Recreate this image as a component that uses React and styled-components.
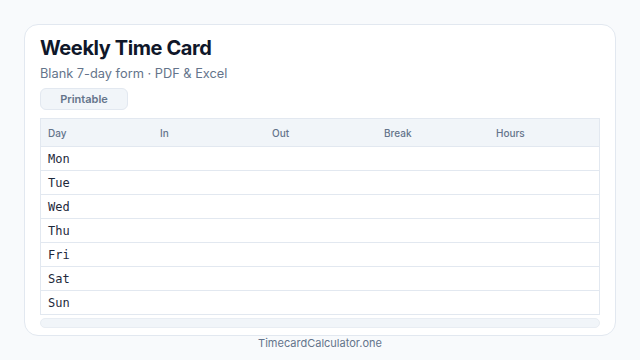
import React from "react";
import styled, { createGlobalStyle } from "styled-components";

const Global = createGlobalStyle`
  html, body { margin: 0; padding: 0; background: #f8fafc; }
  body { font-family: Inter, "Liberation Sans", sans-serif; }
`;

const Page = styled.div`
  width: 640px;
  height: 360px;
  box-sizing: border-box;
  padding: 24px 24px 0;
  display: flex;
  flex-direction: column;
`;

const Card = styled.div`
  background: #ffffff;
  border: 1px solid #e2e8f0;
  border-radius: 14px;
  padding: 10px 15px 7px;
  display: flex;
  flex-direction: column;
`;

const Title = styled.h1`
  margin: 0;
  font-size: 20px;
  line-height: 26px;
  font-weight: 700;
  color: #0f172a;
  letter-spacing: -0.4px;
`;

const Subtitle = styled.div`
  margin-top: 4px;
  font-size: 12.8px;
  line-height: 18px;
  color: #64748b;
`;

const Badge = styled.div`
  margin-top: 5px;
  width: 88px;
  height: 22px;
  box-sizing: border-box;
  border: 1px solid #e2e8f0;
  border-radius: 6px;
  background: #f1f5f9;
  color: #64748b;
  font-size: 11px;
  font-weight: 600;
  display: flex;
  align-items: center;
  justify-content: center;
`;

const Table = styled.div`
  margin-top: 8px;
  border: 1px solid #e2e8f0;
  display: flex;
  flex-direction: column;
`;

const Row = styled.div`
  display: grid;
  grid-template-columns: repeat(5, 112px);
  height: ${(p) => (p.$head ? "27px" : "23px")};
  align-items: center;
  background: ${(p) => (p.$head ? "#f1f5f9" : "#ffffff")};
  border-top: ${(p) => (p.$head ? "none" : "1px solid #e2e8f0")};
`;

const HeadCell = styled.div`
  padding-left: 7px;
  font-size: 10px;
  color: #64748b;
  font-weight: 500;
`;

const DayCell = styled.div`
  padding-left: 7px;
  font-family: "DejaVu Sans Mono", "Liberation Mono", monospace;
  font-size: 12px;
  color: #1e293b;
`;

const Track = styled.div`
  margin-top: 3px;
  height: 10px;
  border-radius: 6px;
  background: #f1f5f9;
  border: 1px solid #e8edf3;
  box-sizing: border-box;
`;

const Footer = styled.div`
  text-align: center;
  font-size: 11px;
  line-height: 14px;
  color: #64748b;
`;

const days = ["Mon", "Tue", "Wed", "Thu", "Fri", "Sat", "Sun"];
const heads = ["Day", "In", "Out", "Break", "Hours"];

export default function App() {
  return (
    <>
      <Global />
      <Page>
        <Card>
          <Title>Weekly Time Card</Title>
          <Subtitle>Blank 7-day form · PDF &amp; Excel</Subtitle>
          <Badge>Printable</Badge>
          <Table>
            <Row $head>
              {heads.map((h) => (
                <HeadCell key={h}>{h}</HeadCell>
              ))}
            </Row>
            {days.map((d) => (
              <Row key={d}>
                <DayCell>{d}</DayCell>
                <div />
                <div />
                <div />
                <div />
              </Row>
            ))}
          </Table>
          <Track />
        </Card>
        <Footer>TimecardCalculator.one</Footer>
      </Page>
    </>
  );
}
